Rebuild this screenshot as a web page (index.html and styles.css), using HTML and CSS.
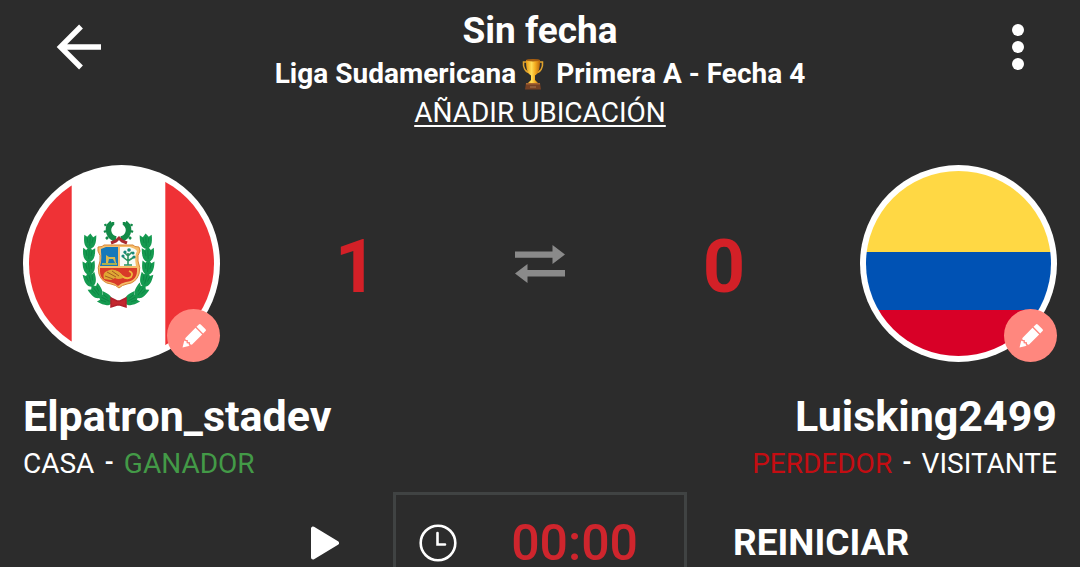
FILE: index.html
```html
<!DOCTYPE html>
<html lang="es">
<head>
<meta charset="utf-8">
<meta name="viewport" content="width=device-width, initial-scale=1">
<title>Liga Sudamericana - Fecha 4</title>
<link rel="stylesheet" href="styles.css">
</head>
<body>
<svg class="defs" aria-hidden="true">
  <symbol id="pencil" viewBox="0 0 28 28" overflow="visible">
    <g transform="translate(-1 1) rotate(45 14 14)" fill="#fff">
      <path d="M10-2.500h8a1.500 1.500 0 0 1 1.500 1.500v4h-11v-4a1.500 1.500 0 0 1 1.500-1.500z"/>
      <path d="M8.500 4.600h11v17l-1.900 1-1.800-1.500-1.800 1.500-1.800-1.500-1.800 1.500-1.900-1z"/>
      <path d="M9.500 24l1 .5 1.700-1.300 1.800 1.500 1.800-1.500 1.700 1.300 1-.5-4.500 7.500z"/>
    </g>
  </symbol>
  <symbol id="leaf" viewBox="-6 -7 12 14" overflow="visible">
    <path d="M0 8C-5 7-6.500 2-6-6L-3-4 0-7.500 3-4 6-6C6.500 2 5 7 0 8z" fill="#159a50"/>
    <path d="M0-4V5M-3-3l1 5M3-3L2 2" stroke="#0a7f40" stroke-width=".7" fill="none"/>
  </symbol>
</svg>

<main class="match">
  <header class="top">
    <button class="icon-button" type="button" aria-label="Volver">
      <svg width="46" height="46" viewBox="0 0 46 46" fill="none" stroke="#fff" stroke-width="5.400"><path d="M45 23H5M25 2.500L4.500 23 25 43.500"/></svg>
    </button>
    <div class="heading">
      <h1 class="date">Sin fecha</h1>
      <p class="league">Liga Sudamericana<svg class="trophy" viewBox="0 0 22 32" role="img" aria-label="Trofeo">
        <defs><linearGradient id="gold"><stop offset="0" stop-color="#e99a13"/><stop offset=".4" stop-color="#ffdc55"/><stop offset=".65" stop-color="#f5ad20"/><stop offset="1" stop-color="#ba650a"/></linearGradient></defs>
        <path d="M5 4H1.500C1 9 3 14 8.500 15M17 4h3.500C21 9 19 14 13.500 15" fill="none" stroke="#dfa12c" stroke-width="1.600"/>
        <path d="M4 2h14c0 8-1 13-5 15.500V22l4 4H5l4-4v-4.500C5 15 4 10 4 2z" fill="url(#gold)"/>
        <ellipse cx="11" cy="2.200" rx="7" ry="1.300" fill="#a95f10"/>
        <path d="M4 25h14l1 6.500H3z" fill="#764124"/><path d="M4 25h14v1.500H4z" fill="#a86531"/>
        <path d="M8 28h6v2H8z" fill="#8f5c3a"/>
      </svg>Primera A - Fecha 4</p>
      <a class="location" href="#ubicacion">AÑADIR UBICACIÓN</a>
    </div>
    <button class="icon-button menu" type="button" aria-label="Más opciones">
      <svg width="12" height="46" viewBox="0 0 12 46" fill="#fff"><circle cx="6" cy="6" r="6"/><circle cx="6" cy="23" r="6"/><circle cx="6" cy="40" r="6"/></svg>
    </button>
  </header>

  <section class="board" aria-label="Marcador">
    <div class="avatar">
      <svg class="flag" viewBox="0 0 185 185" role="img" aria-label="Bandera de Perú">
        <path d="M0 0h185v185H0z" fill="#fff"/>
        <path d="M0 0h42.700v185H0zM136.300 0H185v185h-48.700z" fill="#ef3236"/>
        <g transform="translate(46 44)">
          <g>
            <use href="#leaf" x="-6" y="-7" width="12" height="14" transform="translate(15 26) rotate(3)"/>
            <use href="#leaf" x="-6" y="-7" width="12" height="14" transform="translate(14 39) rotate(2)"/>
            <use href="#leaf" x="-6" y="-7" width="12" height="14" transform="translate(14 52) rotate(-5)"/>
            <use href="#leaf" x="-6" y="-7" width="12" height="14" transform="translate(15 64) rotate(-15)"/>
            <use href="#leaf" x="-6" y="-7" width="12" height="14" transform="translate(21 76) rotate(-36)"/>
            <use href="#leaf" x="-6" y="-7" width="12" height="14" transform="translate(30 84) rotate(-63)"/>
            <use href="#leaf" x="-6" y="-7" width="12" height="14" transform="translate(71 26) rotate(-3)"/>
            <use href="#leaf" x="-6" y="-7" width="12" height="14" transform="translate(73 39) rotate(-2)"/>
            <use href="#leaf" x="-6" y="-7" width="12" height="14" transform="translate(73 52) rotate(5)"/>
            <use href="#leaf" x="-6" y="-7" width="12" height="14" transform="translate(71 64) rotate(15)"/>
            <use href="#leaf" x="-6" y="-7" width="12" height="14" transform="translate(66 76) rotate(36)"/>
            <use href="#leaf" x="-6" y="-7" width="12" height="14" transform="translate(57 84) rotate(63)"/>
          </g>
          <path d="M36 83l6 3h3l6-3v9l-6-2h-3l-6 2z" fill="#c3272f" stroke="#b3202c" stroke-width="1.500"/>
          <path d="M37 8q-5 4-3 10 2 5 7 6M50 8q5 4 3 10-2 5-7 6" fill="none" stroke="#138a48" stroke-width="5.500"/>
          <path d="M31 11l-1-2M31 16l-2 1M33 22l-2 2M56 11l1-2M56 16l2 1M54 22l2 2M38 10v-3M49 10v-3" stroke="#138a48" stroke-width="2.500"/>
          <path d="M36 28l5-2 3-3 3 3 5 2" fill="none" stroke="#a92a2f" stroke-width="3"/>
          <g transform="translate(0 3)">
            <path d="M23 29q5 0 6-2h29q1 2 6 2l1 4q-3 4-2 10 3 7 1 13-3 9-12 10-5 1-8 4-3-3-8-4-9-1-12-10-2-6 1-13 1-6-2-10z" fill="#f6bd6a" stroke="#d88535"/>
            <path d="M26 31l5-2h12v19H25q2-5 1-14z" fill="#1678b9"/>
            <path d="M45 29h10l5 2 2 2q-3 5-1 15H45z" fill="#f7faf6"/>
            <path d="M25 50h37q1 13-11 14-5 1-8 4-3-3-8-4-11-1-10-14z" fill="#d83a28"/>
            <path d="M31 45V37l3 2h6l1 6h-1l-2-4h-4l-1 4z" fill="#d9b84e"/>
            <path d="M27 46h15" stroke="#a8b04e" stroke-width="2"/>
            <path d="M53 47V35M53 43l-5-4M53 43l6-4M53 38l-4-4M53 38l4-4M49 47h8" fill="none" stroke="#2b9260" stroke-width="1.600"/>
            <g fill="#188878"><circle cx="48" cy="38" r="1.600"/><circle cx="50" cy="34" r="1.600"/><circle cx="54" cy="32" r="1.800"/><circle cx="58" cy="35" r="1.600"/><circle cx="59" cy="39" r="1.600"/></g>
            <path d="M38 53q6 1 9 5 5 4 9 1 3-4-2-6" fill="none" stroke="#efb83e" stroke-width="1.800"/>
            <path d="M29 61q-2-6 3-8 5-3 10 0 5 3 6 7-5 2-8 0l-4 2z" fill="#dfa734"/>
            <path d="M32 54l9 5M30 58l8 3M37 53l7 5" stroke="#a65b22" stroke-width="1"/>
          </g>
        </g>
      </svg>
      <button class="edit" type="button" aria-label="Editar equipo local"><svg class="edit-icon" width="24" height="24"><use href="#pencil"/></svg></button>
    </div>
    <output class="score">1</output>
    <button class="icon-button" type="button" aria-label="Intercambiar equipos">
      <svg width="50" height="38" viewBox="0 0 50 38" fill="#8a8a8a"><path d="M0 6.500h37.500V0L50 9.500 37.500 19v-6.300H0zM50 25H12.500v-6L0 28.500 12.500 38v-6.500H50z"/></svg>
    </button>
    <output class="score">0</output>
    <div class="avatar">
      <svg class="flag" viewBox="0 0 185 185" role="img" aria-label="Bandera de Colombia">
        <path d="M0 0h185v81H0z" fill="#ffd844"/><path d="M0 81h185v58H0z" fill="#0052b4"/><path d="M0 139h185v46H0z" fill="#d80027"/>
      </svg>
      <button class="edit" type="button" aria-label="Editar equipo visitante"><svg class="edit-icon" width="24" height="24"><use href="#pencil"/></svg></button>
    </div>
  </section>

  <section class="teams">
    <div class="team">
      <h2 class="name">Elpatron_stadev</h2>
      <p class="status"><span>CASA</span><b class="dash">-</b><span class="winner">GANADOR</span></p>
    </div>
    <div class="team team-away">
      <h2 class="name">Luisking2499</h2>
      <p class="status"><span class="loser">PERDEDOR</span><b class="dash">-</b><span>VISITANTE</span></p>
    </div>
  </section>

  <section class="controls" aria-label="Cronómetro">
    <button class="icon-button play" type="button" aria-label="Iniciar">
      <svg width="28" height="34" viewBox="0 0 28 34"><path d="M2 2.500v29L26 17z" fill="#fff" stroke="#fff" stroke-width="4" stroke-linejoin="round"/></svg>
    </button>
    <div class="timer">
      <svg width="38" height="38" viewBox="0 0 38 38" fill="none" stroke="#fff" stroke-width="2.600" stroke-linecap="round" aria-hidden="true"><circle cx="19" cy="19" r="17.300"/><path d="M18.500 9v11.500H26"/></svg>
      <time class="clock">00:00</time>
    </div>
    <button class="restart" type="button">REINICIAR</button>
  </section>
</main>
</body>
</html>
```
FILE: styles.css
```css
* {
  box-sizing: border-box;
}

body {
  margin: 0;
  background: #2c2c2c;
  color: #fff;
  font-family: Roboto, "Liberation Sans", sans-serif;
}

h1, h2, p {
  margin: 0;
}

button {
  padding: 0;
  border: 0;
  background: none;
  color: inherit;
  font: inherit;
  cursor: pointer;
}

svg {
  display: block;
}

.defs {
  position: absolute;
  width: 0;
  height: 0;
}

.match {
  height: 100vh;
  overflow: hidden;
}

.top {
  display: grid;
  grid-template-columns: 46px 1fr 46px;
  align-items: start;
  padding: 10px 56px 0;
}

.icon-button {
  display: grid;
  place-items: center;
}

.top .icon-button {
  padding-top: 14px;
}

.menu {
  justify-self: end;
}

.heading {
  display: flex;
  flex-direction: column;
  align-items: center;
}

.date {
  font-size: 37px;
  line-height: 42px;
}

.league {
  display: flex;
  align-items: center;
  font-size: 28px;
  font-weight: 700;
  line-height: 44px;
}

.trophy {
  width: 22px;
  height: 32px;
  margin: 0 12px 0 6px;
}

.location {
  color: inherit;
  font-size: 28px;
  line-height: 34px;
  text-decoration-thickness: 2px;
  text-underline-offset: 3px;
}

.board {
  display: grid;
  grid-template-columns: auto 1fr 96px 1fr auto;
  align-items: center;
  padding: 35px 23px 0;
}

.avatar {
  position: relative;
  width: 197px;
  height: 197px;
  padding: 6px;
  border-radius: 50%;
  background: #fff;
}

.flag {
  width: 100%;
  height: 100%;
  border-radius: 50%;
}

.edit {
  position: absolute;
  right: 0;
  bottom: 0;
  display: grid;
  place-items: center;
  width: 53px;
  height: 53px;
  border-radius: 50%;
  background: #ff877e;
}

.edit-icon {
  overflow: visible;
}

.score {
  padding-top: 6px;
  color: #d32027;
  font-size: 74px;
  font-weight: 700;
  line-height: 80px;
  text-align: center;
}

.teams {
  display: flex;
  justify-content: space-between;
  padding: 29px 23px 0;
}

.team {
  display: flex;
  flex-direction: column;
  gap: 4px;
}

.team-away {
  align-items: flex-end;
}

.name {
  font-size: 43px;
  line-height: 50px;
}

.status {
  display: flex;
  gap: 10px;
  font-size: 28px;
  line-height: 38px;
}

.dash {
  font-size: 24px;
  line-height: 34px;
}

.winner {
  color: #439a47;
}

.loser {
  color: #c40d12;
}

.controls {
  display: grid;
  grid-template-columns: 1fr 294px 1fr;
  align-items: center;
  padding-top: 9px;
}

.play {
  justify-self: end;
  margin-right: 54px;
}

.timer {
  display: flex;
  align-items: center;
  justify-content: space-between;
  height: 102px;
  padding: 0 46px 0 23px;
  border: 3px solid #404343;
}

.clock {
  color: #cf252d;
  font-size: 50px;
  font-weight: 500;
  line-height: 46px;
}

.restart {
  justify-self: start;
  margin-left: 46px;
  font-size: 37px;
  font-weight: 700;
  line-height: 46px;
}
```
